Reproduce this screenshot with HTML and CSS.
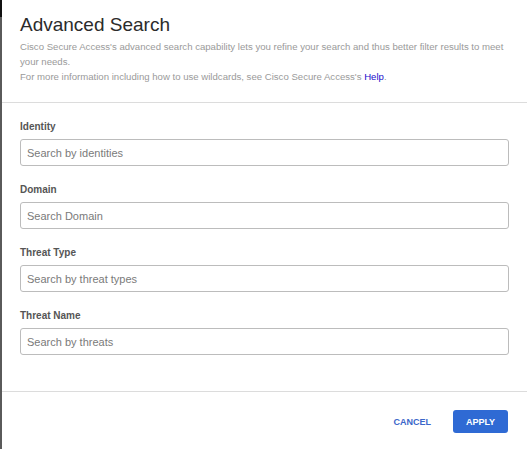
FILE: index.html
```html
<!DOCTYPE html>
<html lang="en">
<head>
    <meta charset="UTF-8">
    <meta name="viewport" content="width=device-width, initial-scale=1.0">
    <title>Advanced Search</title>
    <link rel="stylesheet" href="styles.css">
</head>
<body>
    <div class="backdrop">
        <div class="modal">
            <div class="modal-header">
                <h1>Advanced Search</h1>
                <p>Cisco Secure Access's advanced search capability lets you refine your search and thus better filter results to meet your needs.</p>
                <p>For more information including how to use wildcards, see Cisco Secure Access's <a href="#">Help</a>.</p>
            </div>

            <div class="modal-body">
                <div class="field">
                    <label>Identity</label>
                    <input type="text" class="text-input" placeholder="Search by identities">
                </div>
                <div class="field">
                    <label>Domain</label>
                    <input type="text" class="text-input" placeholder="Search Domain">
                </div>
                <div class="field">
                    <label>Threat Type</label>
                    <input type="text" class="text-input" placeholder="Search by threat types">
                </div>
                <div class="field">
                    <label>Threat Name</label>
                    <input type="text" class="text-input" placeholder="Search by threats">
                </div>
            </div>

            <div class="modal-footer">
                <button class="btn btn-link">CANCEL</button>
                <button class="btn btn-primary">APPLY</button>
            </div>
        </div>
    </div>
</body>
</html>
```

FILE: styles.css
```css
* {
    margin: 0;
    padding: 0;
    box-sizing: border-box;
    font-family: 'Liberation Sans', Arial, sans-serif;
}

body {
    background-color: #5a5a5a;
    height: 449px;
    overflow: hidden;
}

.backdrop {
    padding-left: 2px;
    height: 100%;
    background: linear-gradient(#111 0, #111 17px, #5a5a5a 17px);
}

.modal {
    background-color: #fff;
    height: 100%;
}

.modal-header {
    padding: 13px 18px 18px;
    border-bottom: 1px solid #dcdcdc;
}

.modal-header h1 {
    font-size: 19px;
    font-weight: 400;
    color: #2b2b2b;
    line-height: 24px;
    margin-bottom: 2px;
}

.modal-header p {
    font-size: 9.6px;
    color: #9a9a9a;
    line-height: 15px;
}

.modal-header a {
    color: #1a0dcc;
    text-decoration: none;
}

.modal-body {
    padding: 17px 18px 36px;
    border-bottom: 1px solid #dcdcdc;
}

.field {
    margin-bottom: 17px;
}

.field:last-child {
    margin-bottom: 0;
}

.field label {
    display: block;
    font-size: 10px;
    font-weight: 700;
    color: #555;
    line-height: 14px;
    margin-bottom: 5px;
}

.text-input {
    display: block;
    width: 489px;
    height: 27px;
    padding: 0 6px;
    border: 1px solid #bcbcbc;
    border-radius: 3px;
    font-size: 11px;
    color: #333;
    outline: none;
}

.text-input::placeholder {
    color: #7a7a7a;
}

.modal-footer {
    display: flex;
    justify-content: flex-end;
    align-items: center;
    gap: 22px;
    padding: 18px 19px;
}

.btn {
    border: none;
    background: none;
    font-size: 9px;
    font-weight: 700;
    cursor: pointer;
}

.btn-link {
    color: #3a66c9;
}

.btn-primary {
    background-color: #2f6ad4;
    color: #fff;
    width: 55px;
    height: 23px;
    border-radius: 3px;
}
```
